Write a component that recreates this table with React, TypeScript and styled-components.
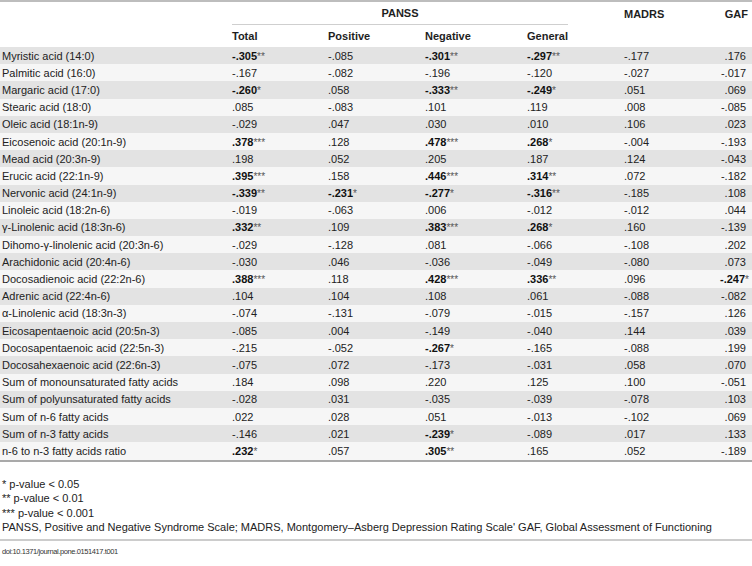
import React from 'react'
import styled, { createGlobalStyle } from 'styled-components'

const GlobalStyle = createGlobalStyle`
  body {
    margin: 0;
    background: #ffffff;
    font-family: "Liberation Sans", Arial, sans-serif;
    color: #222222;
  }
`

const COLUMNS = '232px 96px 97px 102px 97px 96px 32px'

const Page = styled.div`
  width: 752px;
  overflow: hidden;
`

const Table = styled.div`
  border-top: 2px solid #bdbdbd;
  border-bottom: 2px solid #a9a9a9;
  font-size: 11px;
`

const HeadRow = styled.div<{ $height: number }>`
  display: grid;
  grid-template-columns: ${COLUMNS};
  height: ${p => p.$height}px;
  align-items: center;
  font-weight: bold;
  color: #1e1e1e;
`

const GroupHead = styled.div`
  grid-column: 2 / span 4;
  align-self: end;
  width: 336px;
  text-align: center;
  padding-bottom: 5px;
  border-bottom: 1px solid #cfcfcf;
`

const HeadCell = styled.div<{ $right?: boolean }>`
  text-align: ${p => (p.$right ? 'right' : 'left')};
  padding-right: ${p => (p.$right ? '4px' : '0')};
  white-space: nowrap;
`

const DataRow = styled.div<{ $shade: boolean }>`
  display: grid;
  grid-template-columns: ${COLUMNS};
  height: 17.2px;
  align-items: center;
  background: ${p => (p.$shade ? '#e3e3e3' : '#f6f6f6')};
`

const Label = styled.div`
  padding-left: 2px;
  white-space: nowrap;
`

const Value = styled.div<{ $right?: boolean }>`
  text-align: ${p => (p.$right ? 'right' : 'left')};
  padding-right: ${p => (p.$right ? '6px' : '0')};
  white-space: nowrap;
`

const Strong = styled.b`
  color: #111111;
`

const Stars = styled.span`
  color: #555555;
  font-size: 10px;
`

const Notes = styled.div`
  padding: 15px 0 0 2px;
  font-size: 11px;
  line-height: 14.5px;
  color: #222222;
`

const Rule = styled.div`
  margin-top: 4px;
  border-top: 2px solid #cccccc;
`

const Doi = styled.div`
  padding: 6px 0 0 2px;
  font-size: 7.5px;
  line-height: 10px;
  letter-spacing: -0.4px;
  color: #333333;
`

type Row = [string, string[]]

const rows: Row[] = [
  ['Myristic acid (14:0)', ['-.305**', '-.085', '-.301**', '-.297**', '-.177', '.176']],
  ['Palmitic acid (16:0)', ['-.167', '-.082', '-.196', '-.120', '-.027', '-.017']],
  ['Margaric acid (17:0)', ['-.260*', '.058', '-.333**', '-.249*', '.051', '.069']],
  ['Stearic acid (18:0)', ['.085', '-.083', '.101', '.119', '.008', '-.085']],
  ['Oleic acid (18:1n-9)', ['-.029', '.047', '.030', '.010', '.106', '.023']],
  ['Eicosenoic acid (20:1n-9)', ['.378***', '.128', '.478***', '.268*', '-.004', '-.193']],
  ['Mead acid (20:3n-9)', ['.198', '.052', '.205', '.187', '.124', '-.043']],
  ['Erucic acid (22:1n-9)', ['.395***', '.158', '.446***', '.314**', '.072', '-.182']],
  ['Nervonic acid (24:1n-9)', ['-.339**', '-.231*', '-.277*', '-.316**', '-.185', '.108']],
  ['Linoleic acid (18:2n-6)', ['-.019', '-.063', '.006', '-.012', '-.012', '.044']],
  ['γ-Linolenic acid (18:3n-6)', ['.332**', '.109', '.383***', '.268*', '.160', '-.139']],
  ['Dihomo-γ-linolenic acid (20:3n-6)', ['-.029', '-.128', '.081', '-.066', '-.108', '.202']],
  ['Arachidonic acid (20:4n-6)', ['-.030', '.046', '-.036', '-.049', '-.080', '.073']],
  ['Docosadienoic acid (22:2n-6)', ['.388***', '.118', '.428***', '.336**', '.096', '-.247*']],
  ['Adrenic acid (22:4n-6)', ['.104', '.104', '.108', '.061', '-.088', '-.082']],
  ['α-Linolenic acid (18:3n-3)', ['-.074', '-.131', '-.079', '-.015', '-.157', '.126']],
  ['Eicosapentaenoic acid (20:5n-3)', ['-.085', '.004', '-.149', '-.040', '.144', '.039']],
  ['Docosapentaenoic acid (22:5n-3)', ['-.215', '-.052', '-.267*', '-.165', '-.088', '.199']],
  ['Docosahexaenoic acid (22:6n-3)', ['-.075', '.072', '-.173', '-.031', '.058', '.070']],
  ['Sum of monounsaturated fatty acids', ['.184', '.098', '.220', '.125', '.100', '-.051']],
  ['Sum of polyunsaturated fatty acids', ['-.028', '.031', '-.035', '-.039', '-.078', '.103']],
  ['Sum of n-6 fatty acids', ['.022', '.028', '.051', '-.013', '-.102', '.069']],
  ['Sum of n-3 fatty acids', ['-.146', '.021', '-.239*', '-.089', '.017', '.133']],
  ['n-6 to n-3 fatty acids ratio', ['.232*', '.057', '.305**', '.165', '.052', '-.189']],
]

const Cell: React.FC<{ text: string }> = ({ text }) => {
  const stars = text.match(/\*+$/)
  if (!stars) return <>{text}</>
  return (
    <>
      <Strong>{text.slice(0, text.length - stars[0].length)}</Strong>
      <Stars>{stars[0]}</Stars>
    </>
  )
}

const App: React.FC = () => {
  return (
    <Page>
      <GlobalStyle />
      <Table>
        <HeadRow $height={23}>
          <div />
          <GroupHead>PANSS</GroupHead>
          <HeadCell>MADRS</HeadCell>
          <HeadCell $right>GAF</HeadCell>
        </HeadRow>
        <HeadRow $height={22}>
          <div />
          <HeadCell>Total</HeadCell>
          <HeadCell>Positive</HeadCell>
          <HeadCell>Negative</HeadCell>
          <HeadCell>General</HeadCell>
          <div />
          <div />
        </HeadRow>
        {rows.map(([label, values], i) => (
          <DataRow key={label} $shade={i % 2 === 0}>
            <Label>{label}</Label>
            {values.map((v, j) => (
              <Value key={j} $right={j === 5}>
                <Cell text={v} />
              </Value>
            ))}
          </DataRow>
        ))}
      </Table>
      <Notes>
        <div>* p-value &lt; 0.05</div>
        <div>** p-value &lt; 0.01</div>
        <div>*** p-value &lt; 0.001</div>
        <div>
          PANSS, Positive and Negative Syndrome Scale; MADRS, Montgomery–Asberg Depression Rating Scale' GAF, Global
          Assessment of Functioning
        </div>
      </Notes>
      <Rule />
      <Doi>doi:10.1371/journal.pone.0151417.t001</Doi>
    </Page>
  )
}

export default App
